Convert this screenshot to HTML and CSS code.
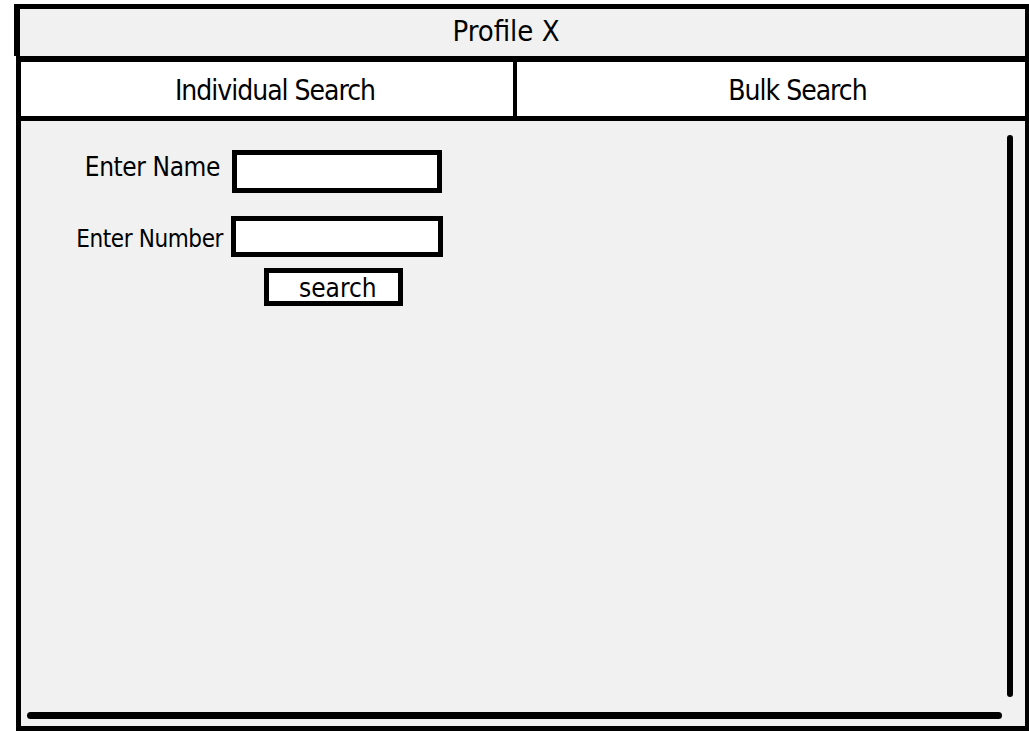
FILE: index.html
```html
<!DOCTYPE html>
<html lang="en">
<head>
<meta charset="utf-8">
<title>Profile X</title>
<link rel="stylesheet" href="styles.css">
</head>
<body>
<div class="window">
  <header class="titlebar">Profile X</header>
  <div class="main">
    <nav class="tabs">
      <div class="tab tab-left">Individual Search</div>
      <div class="tab tab-right">Bulk Search</div>
    </nav>
    <section class="panel">
      <form class="form">
        <label class="label label-name" for="name">Enter Name</label>
        <input class="field field-name" id="name" type="text">
        <label class="label label-number" for="number">Enter Number</label>
        <input class="field field-number" id="number" type="text">
        <button class="search-btn" type="button">search</button>
      </form>
      <div class="vbar"></div>
      <div class="hbar"></div>
    </section>
  </div>
</div>
</body>
</html>
```

FILE: styles.css
```css
* {
  box-sizing: border-box;
}

html, body {
  margin: 0;
  padding: 0;
  background: #ffffff;
}

body {
  font-family: "DejaVu Sans Condensed", "DejaVu Sans", sans-serif;
  font-stretch: semi-condensed;
  color: #000;
  width: 1029px;
  height: 732px;
  overflow: hidden;
}

.window {
  padding-top: 4px;
}

.titlebar {
  margin-left: 14px;
  height: 52px;
  border-top: 5px solid #000;
  border-left: 6px solid #000;
  border-right: 4px solid #000;
  background: #f1f1f1;
  font-size: 29px;
  line-height: 42px;
  padding-top: 1px;
  padding-bottom: 4px;
  padding-right: 33px;
  text-align: center;
}

.main {
  margin-left: 16px;
  border-top: 6px solid #000;
  border-left: 5px solid #000;
  border-right: 4px solid #000;
  border-bottom: 5px solid #000;
}

.tabs {
  display: grid;
  grid-template-columns: 496px 1fr;
  height: 59px;
  border-bottom: 5px solid #000;
  background: #fff;
}

.tab {
  font-size: 28px;
  letter-spacing: -1px;
  line-height: 51px;
  padding-top: 3px;
  text-align: center;
}

.tab-left {
  border-right: 4px solid #000;
  padding-left: 16px;
}

.tab-right {
  padding-left: 53px;
}

.panel {
  height: 605px;
  background: #f1f1f1;
  display: grid;
  grid-template-columns: 1fr 6px;
  grid-template-rows: 1fr 7px;
  row-gap: 15px;
  padding: 14px 12px 7px 6px;
}

.form {
  grid-column: 1;
  grid-row: 1;
  display: grid;
  grid-template-columns: 200px auto;
  grid-template-rows: 43px 41px 38px;
  row-gap: 23px;
  align-content: start;
  justify-items: start;
  padding-top: 15px;
}

.form > .search-btn {
  margin-top: -12px;
}

.label {
  justify-self: end;
  align-self: start;
}

.label-name {
  font-size: 26px;
  letter-spacing: -0.4px;
  line-height: 30px;
  margin-top: 2px;
  padding-right: 7px;
}

.label-number {
  font-size: 24px;
  letter-spacing: -0.4px;
  line-height: 28px;
  margin-top: 9px;
  padding-right: 4px;
}

.field {
  border: 5px solid #000;
  background: #fff;
  margin: 0;
  padding: 0;
  outline: none;
}

.field-name {
  width: 210px;
  height: 43px;
  margin-left: 5px;
}

.field-number {
  width: 212px;
  height: 41px;
  margin-left: 4px;
}

.search-btn {
  grid-column: 2;
  width: 139px;
  height: 38px;
  margin-left: 37px;
  border: 5px solid #000;
  background: #fff;
  font-family: inherit;
  font-stretch: inherit;
  font-size: 26px;
  line-height: 28px;
  color: #000;
  text-align: left;
  padding: 1px 0 0 30px;
  border-radius: 0;
}

.vbar {
  grid-column: 2;
  grid-row: 1;
  background: #000;
  border-radius: 3px;
}

.hbar {
  grid-column: 1;
  grid-row: 2;
  margin-right: 5px;
  background: #000;
  border-radius: 4px;
}
```
